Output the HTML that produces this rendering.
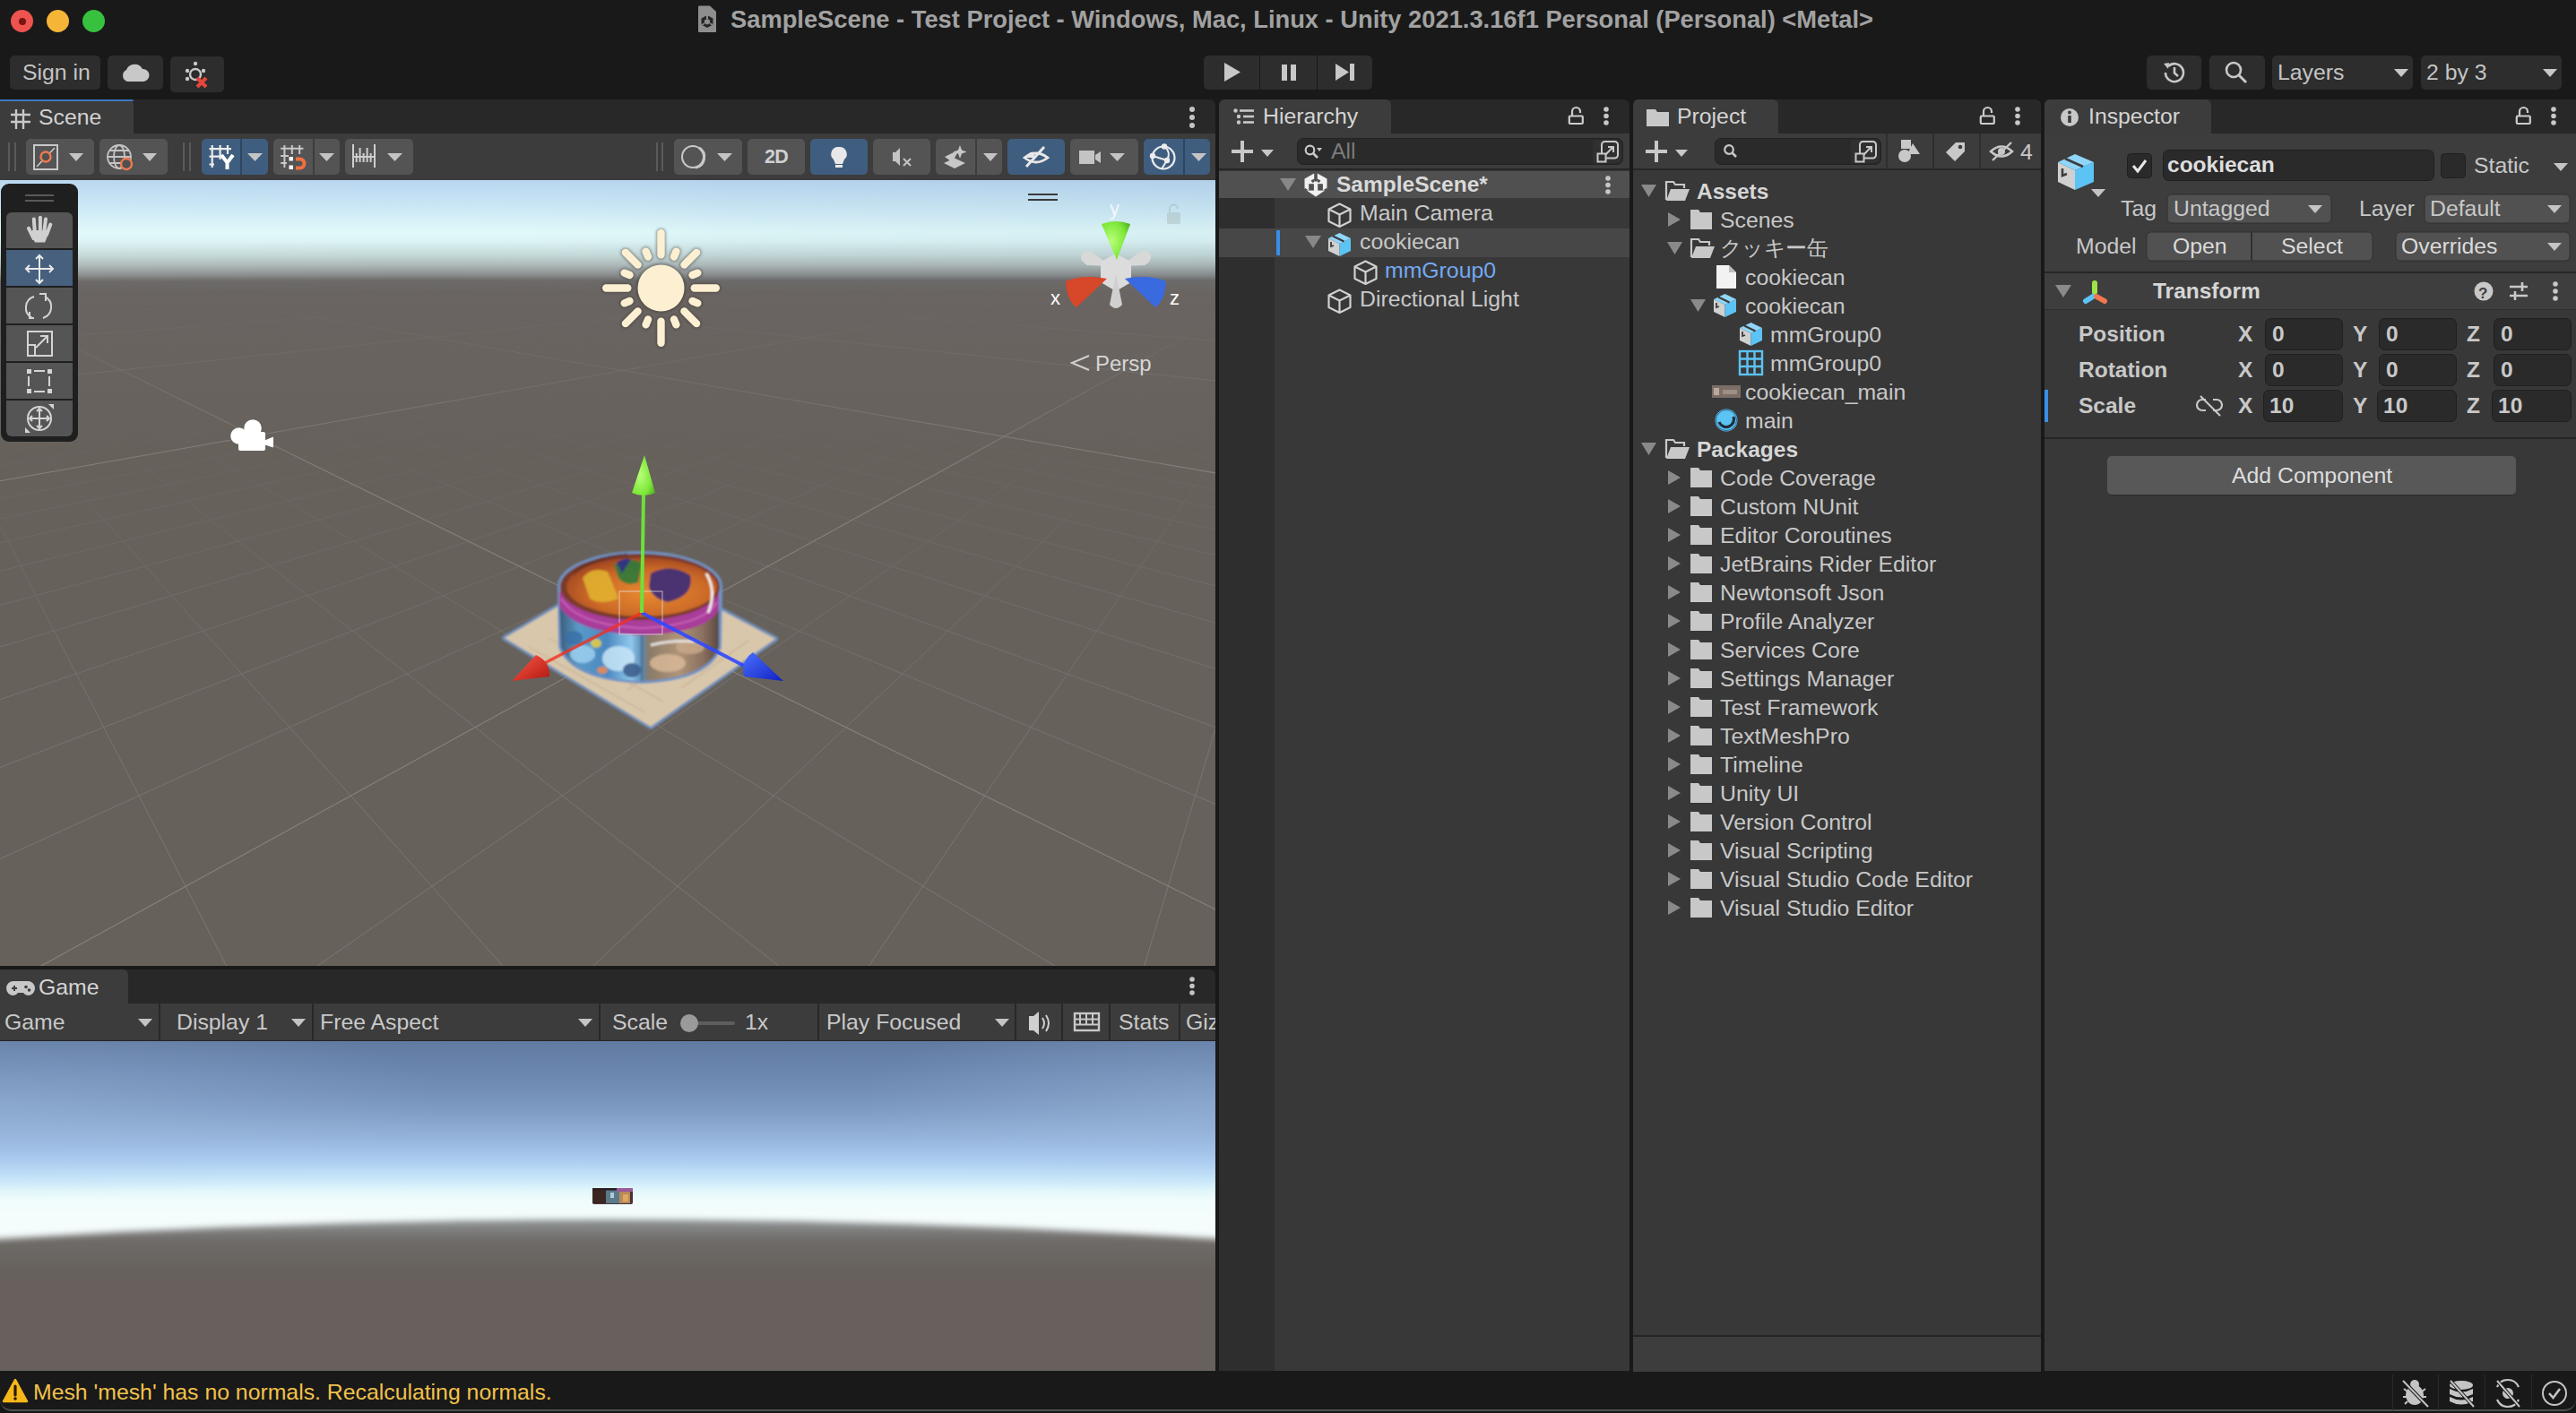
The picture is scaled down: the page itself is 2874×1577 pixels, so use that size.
<!DOCTYPE html>
<html><head><meta charset="utf-8">
<style>
*{box-sizing:border-box;margin:0;padding:0}
html,body{width:2874px;height:1577px;overflow:hidden;background:#191919}
body{position:relative;font-family:"Liberation Sans",sans-serif;font-size:24.8px;color:#c8c8c8}
.a{position:absolute}
.t{position:absolute;white-space:nowrap;line-height:1}
.b{font-weight:700;font-size:24.5px}
.tabbar{position:absolute;background:#282828;border-radius:6px 6px 0 0}
.tab{position:absolute;background:#3c3c3c;border-radius:6px 6px 0 0}
.tbar{position:absolute;background:#3c3c3c}
.btn{position:absolute;background:#545454;border-radius:5px}
.sel{background:#3f5d7f}
.panel{position:absolute;background:#383838}
.mtb{position:absolute;background:#2d2d2d;border-radius:5px}
svg{position:absolute;overflow:visible}
.dd{position:absolute;width:0;height:0;border-left:8px solid transparent;border-right:8px solid transparent;border-top:9px solid #c4c4c4}
</style></head><body>
<!-- Title bar -->
<div class="a" style="left:12px;top:11px;width:25px;height:25px;border-radius:50%;background:#ee5350"></div>
<div class="a" style="left:20.5px;top:19.5px;width:8px;height:8px;border-radius:50%;background:#7a1410"></div>
<div class="a" style="left:52px;top:11px;width:25px;height:25px;border-radius:50%;background:#f5b537"></div>
<div class="a" style="left:92px;top:11px;width:25px;height:25px;border-radius:50%;background:#38c13e"></div>
<svg width="26" height="32" viewBox="0 0 26 32" style="left:778px;top:5px"><path d="M1 2.5Q1 1.5 2 1.5H14L21 8V30Q21 31 20 31H2Q1 31 1 30Z" fill="#8e8e8e"/><path d="M11 12L17.5 15.5V22.5L11 26L4.5 22.5V15.5Z" fill="#262626"/><path d="M11 16L14 17.5V21L11 22.5L8 21V17.5Z" fill="#8e8e8e"/><rect x="10" y="11" width="2" height="5" fill="#8e8e8e"/><path d="M4.5 22L8 20.5V22L5.5 23.5Z M17.5 22L14 20.5V22L16.5 23.5Z" fill="#8e8e8e"/></svg>
<div class="t b" style="left:815px;top:8px;font-size:27.3px;color:#a2a2a2">SampleScene - Test Project - Windows, Mac, Linux - Unity 2021.3.16f1 Personal (Personal) &lt;Metal&gt;</div>
<!-- Main toolbar -->
<div class="mtb" style="left:11px;top:62px;width:101px;height:38px"></div>
<div class="t" style="left:25px;top:69px;color:#c4c4c4">Sign in</div>
<div class="mtb" style="left:120px;top:62px;width:62px;height:38px"></div>
<svg width="34" height="22" viewBox="0 0 34 22" style="left:134px;top:70px"><path d="M8 21A7 7 0 0 1 7 8A10 10 0 0 1 25 7A7 7 0 0 1 26 21Z" fill="#c8c8c8"/></svg>
<div class="mtb" style="left:190px;top:63px;width:60px;height:40px"></div>
<svg width="32" height="32" viewBox="0 0 32 32" style="left:205px;top:68px"><g fill="#c8c8c8"><circle cx="13" cy="3" r="2.2"/><circle cx="4" cy="11" r="2.2"/><circle cx="4" cy="20" r="2.2"/><circle cx="22" cy="11" r="2.2"/></g><circle cx="13" cy="15" r="6" fill="none" stroke="#c8c8c8" stroke-width="2.4"/><path d="M15 19L25 29M25 19L15 29" stroke="#e8453c" stroke-width="4"/></svg>
<div class="mtb" style="left:1343px;top:62px;width:62px;height:38px;border-radius:5px 0 0 5px"></div>
<div class="mtb" style="left:1406px;top:62px;width:63px;height:38px;border-radius:0"></div>
<div class="mtb" style="left:1470px;top:62px;width:61px;height:38px;border-radius:0 5px 5px 0"></div>
<svg width="200" height="40" viewBox="1340 60 200 40" style="left:1340px;top:60px">
<path d="M1366 70V91L1384 80.5Z" fill="#c8c8c8"/>
<rect x="1430" y="72" width="6" height="18" fill="#c8c8c8"/><rect x="1440" y="72" width="6" height="18" fill="#c8c8c8"/>
<path d="M1490 71V90L1505 80.5Z" fill="#c8c8c8"/><rect x="1506" y="71" width="5" height="19" fill="#c8c8c8"/>
</svg>
<div class="mtb" style="left:2395px;top:62px;width:61px;height:38px"></div>
<svg width="30" height="30" viewBox="0 0 30 30" style="left:2411px;top:66px"><path d="M5 15A10 10 0 1 0 8 8" stroke="#c8c8c8" stroke-width="2.6" fill="none"/><path d="M3 5L9 4L8 11Z" fill="#c8c8c8"/><path d="M15 9V15.5L19 19" stroke="#c8c8c8" stroke-width="2.6" fill="none"/></svg>
<div class="mtb" style="left:2465px;top:62px;width:62px;height:38px"></div>
<svg width="30" height="30" viewBox="0 0 30 30" style="left:2481px;top:67px"><circle cx="11" cy="11" r="8" stroke="#c8c8c8" stroke-width="2.6" fill="none"/><path d="M17 17L25 25" stroke="#c8c8c8" stroke-width="3"/></svg>
<div class="mtb" style="left:2535px;top:62px;width:157px;height:38px"></div>
<div class="t" style="left:2541px;top:69px;color:#c4c4c4">Layers</div>
<div class="mtb" style="left:2701px;top:62px;width:157px;height:38px"></div>
<div class="t" style="left:2707px;top:69px;color:#c4c4c4">2 by 3</div>
<svg width="200" height="20" viewBox="2660 70 200 20" style="left:2660px;top:70px"><path d="M2671 77H2687L2679 86Z" fill="#c8c8c8"/><path d="M2837 77H2853L2845 86Z" fill="#c8c8c8"/></svg>

<!-- SCENE PANEL -->
<div class="tabbar" style="left:0;top:111px;width:1356px;height:38px;border-radius:0 6px 0 0"></div>
<div class="tab" style="left:0;top:111px;width:149px;height:38px;border-radius:0 6px 0 0"></div>
<div class="a" style="left:0;top:111px;width:149px;height:2px;background:#3d78c2;border-radius:0 2px 0 0"></div>
<svg width="24" height="24" style="left:11px;top:121px" viewBox="0 0 24 24"><g stroke="#c8c8c8" stroke-width="2.4" fill="none"><path d="M7 1v22M15 1v22M1 7h22M1 15h22"/></g></svg>
<div class="t" style="left:43px;top:119px;color:#d2d2d2">Scene</div>
<svg width="8" height="26" style="left:1326px;top:118px" viewBox="0 0 8 26"><g fill="#c4c4c4"><circle cx="4" cy="4" r="3"/><circle cx="4" cy="13" r="3"/><circle cx="4" cy="22" r="3"/></g></svg>
<div class="tbar" style="left:0;top:149px;width:1356px;height:52px"></div>
<div class="a" style="left:9px;top:159px;width:2px;height:32px;background:#5a5a5a"></div>
<div class="a" style="left:16px;top:159px;width:2px;height:32px;background:#5a5a5a"></div>
<div class="btn" style="left:29px;top:155px;width:76px;height:40px"></div>
<div class="btn" style="left:111px;top:155px;width:76px;height:40px"></div>
<div class="a" style="left:204px;top:159px;width:2px;height:32px;background:#5a5a5a"></div>
<div class="a" style="left:211px;top:159px;width:2px;height:32px;background:#5a5a5a"></div>
<div class="btn sel" style="left:225px;top:155px;width:74px;height:40px"></div>
<div class="a" style="left:268px;top:155px;width:2px;height:40px;background:#2f4660"></div>
<div class="btn" style="left:305px;top:155px;width:74px;height:40px"></div>
<div class="a" style="left:349px;top:155px;width:2px;height:40px;background:#3c3c3c"></div>
<div class="btn" style="left:385px;top:155px;width:76px;height:40px"></div>
<div class="a" style="left:732px;top:159px;width:2px;height:32px;background:#5a5a5a"></div>
<div class="a" style="left:738px;top:159px;width:2px;height:32px;background:#5a5a5a"></div>
<div class="btn" style="left:752px;top:155px;width:76px;height:40px"></div>
<div class="btn" style="left:834px;top:155px;width:64px;height:40px"></div>
<div class="btn sel" style="left:904px;top:155px;width:64px;height:40px"></div>
<div class="btn" style="left:974px;top:155px;width:64px;height:40px"></div>
<div class="btn" style="left:1044px;top:155px;width:74px;height:40px"></div>
<div class="a" style="left:1088px;top:155px;width:2px;height:40px;background:#3c3c3c"></div>
<div class="btn sel" style="left:1124px;top:155px;width:64px;height:40px"></div>
<div class="btn" style="left:1194px;top:155px;width:76px;height:40px"></div>
<div class="btn sel" style="left:1276px;top:155px;width:74px;height:40px"></div>
<div class="a" style="left:1320px;top:155px;width:2px;height:40px;background:#2f4660"></div>
<div class="t b" style="left:853px;top:164.5px;color:#d0d0d0;font-size:21.5px;letter-spacing:-0.8px">2D</div>
<svg width="1356" height="60" viewBox="0 145 1356 60" style="left:0;top:145px">
<g fill="#c4c4c4">
<path d="M77 171H93L85 180Z"/><path d="M159 171H175L167 180Z"/><path d="M276 171H293L284.5 180Z"/><path d="M356 171H373L364.5 180Z"/><path d="M432 171H449L440.5 180Z"/>
<path d="M800 171H817L808.5 180Z"/><path d="M1097 171H1113L1105 180Z"/><path d="M1238 171H1255L1246.5 180Z"/><path d="M1329 171H1346L1337.5 180Z"/>
</g>
<!-- btn1 icon -->
<rect x="38" y="162" width="26" height="27" fill="none" stroke="#c8c8c8" stroke-width="2"/>
<path d="M41 186L61 165" stroke="#c8c8c8" stroke-width="1.6"/>
<circle cx="51" cy="175" r="5.5" fill="#505050" stroke="#f07a50" stroke-width="2.4"/>
<!-- globe -->
<g stroke="#c4c4c4" stroke-width="1.8" fill="none"><circle cx="133" cy="175" r="13"/><ellipse cx="133" cy="175" rx="6" ry="13"/><path d="M120 175H146M122 168H144M122 182H144"/></g>
<circle cx="141" cy="183" r="6" fill="#505050" stroke="#f07a50" stroke-width="2.4"/>
<!-- grid Y -->
<g stroke="#ececec" stroke-width="2.2" fill="none"><path d="M236.7 162V187M245.6 162V178M254 162V172M233.5 166.2H258M233.5 174.6H246M233.5 183.5H239"/></g>
<path d="M247 173L253.5 181.5L260 173M253.5 181V189" stroke="#ffffff" stroke-width="4" fill="none"/>
<!-- grid snap -->
<g stroke="#c8c8c8" stroke-width="2" fill="none"><path d="M317.4 162V187M325.8 162V172M334.2 162V172M313.2 165.7H338.4M313.2 174.1H322M313.2 182H320"/></g>
<rect x="322.5" y="175" width="4.5" height="4.5" fill="#fff"/><rect x="322.5" y="184.5" width="4.5" height="4.5" fill="#fff"/>
<path d="M330 177.5H334.5A5 5 0 0 1 334.5 187.5H330" stroke="#f07040" stroke-width="4" fill="none"/>
<!-- ruler -->
<g stroke="#cfcfcf" stroke-width="2" fill="none"><path d="M394 161V187M418 161V187M394 175H418M397.7 171V181M401.6 165V181M405.6 171V181M409.6 165V181M413.6 171V181"/></g>
<!-- shading sphere -->
<circle cx="773" cy="175" r="12" fill="none" stroke="#c8c8c8" stroke-width="2"/>
<path d="M780 165A12 12 0 0 1 776 187" stroke="#c8c8c8" stroke-width="3" fill="none"/>
<!-- bulb -->
<path d="M936 164A8 8 0 0 1 942 178L940 183H932L930 178A8 8 0 0 1 936 164Z" fill="#e8e8e8"/>
<rect x="932" y="184" width="8" height="3" fill="#e8e8e8"/>
<!-- audio muted -->
<path d="M996 170H999L1004 165V185L999 180H996Z" fill="#c4c4c4"/><path d="M1008 177L1016 185M1016 177L1008 185" stroke="#c4c4c4" stroke-width="2"/>
<!-- effects -->
<path d="M1053 182L1065 176.5L1077 182L1065 188Z" fill="#c8c8c8"/>
<path d="M1054 175L1065 169.5L1068 171L1064 178L1072 180L1065 183Z" fill="#c8c8c8"/>
<path d="M1071 162L1073 167.5L1078.5 169.5L1073 171.5L1071 177L1069 171.5L1063.5 169.5L1069 167.5Z" fill="#c8c8c8"/>
<!-- hidden eye -->
<path d="M1143 176Q1156 166 1169 176Q1156 186 1143 176Z" fill="none" stroke="#e8e8e8" stroke-width="2.8"/><path d="M1146 176A6 6 0 0 1 1154 170V176Z" fill="#e8e8e8"/>
<path d="M1145 186L1165 164" stroke="#e8e8e8" stroke-width="3"/>
<!-- camera -->
<rect x="1204" y="168" width="17" height="15" fill="#c4c4c4"/><path d="M1222 173L1228 169V182L1222 178Z" fill="#c4c4c4"/>
<!-- gizmo globe -->
<circle cx="1298" cy="176" r="12.5" fill="none" stroke="#ececec" stroke-width="2.2"/>
<path d="M1299 163Q1307 170 1302 179L1286 174M1302 179L1296 188.5" stroke="#ececec" stroke-width="2" fill="none"/>
<g fill="#ececec"><circle cx="1299" cy="163.5" r="3.2"/><circle cx="1286" cy="174" r="3.2"/><circle cx="1302" cy="179" r="3.2"/></g>
</svg>

<div class="a" style="left:0;top:201px;width:1356px;height:877px;overflow:hidden;background:linear-gradient(#b8d6f0 0px,#c8e5f5 26px,#e0f9fa 58px,#dcf4f5 68px,#c4d8d8 84px,#adb8b8 95px,#8d9090 105px,#6c6a69 112px,#6a6562 125px,#67615c 300px)">
<svg width="1356" height="877" viewBox="0 201 1356 877" style="left:0;top:0">
<defs>
<linearGradient id="gfade" x1="0" y1="0" x2="0" y2="1"><stop offset="0" stop-color="#fff" stop-opacity="0"/><stop offset="0.118" stop-color="#fff" stop-opacity="0.03"/><stop offset="0.224" stop-color="#fff" stop-opacity="0.15"/><stop offset="0.38" stop-color="#fff" stop-opacity="0.4"/><stop offset="0.59" stop-color="#fff" stop-opacity="0.8"/><stop offset="0.816" stop-color="#fff" stop-opacity="1"/><stop offset="1" stop-color="#fff" stop-opacity="1"/></linearGradient>
<linearGradient id="gfade2" x1="0" y1="0" x2="0" y2="1"><stop offset="0" stop-color="#fff" stop-opacity="0"/><stop offset="0.04" stop-color="#fff" stop-opacity="0.05"/><stop offset="0.134" stop-color="#fff" stop-opacity="0.35"/><stop offset="0.29" stop-color="#fff" stop-opacity="1"/><stop offset="1" stop-color="#fff" stop-opacity="1"/></linearGradient>
<mask id="gmask" maskUnits="userSpaceOnUse" x="0" y="300" width="1356" height="800"><rect x="0" y="330" width="1356" height="760" fill="url(#gfade)"/></mask>
<mask id="gmask2" maskUnits="userSpaceOnUse" x="0" y="300" width="1356" height="800"><rect x="0" y="318" width="1356" height="760" fill="url(#gfade2)"/></mask>
<radialGradient id="green" cx="0.35" cy="0.5" r="0.8"><stop offset="0" stop-color="#b8ff78"/><stop offset="0.6" stop-color="#7ee83a"/><stop offset="1" stop-color="#4aa820"/></radialGradient>
<linearGradient id="redc" x1="0" y1="0" x2="1" y2="1"><stop offset="0" stop-color="#ff5a4a"/><stop offset="1" stop-color="#b01810"/></linearGradient>
<linearGradient id="bluec" x1="0" y1="0" x2="1" y2="1"><stop offset="0" stop-color="#4a70ff"/><stop offset="1" stop-color="#1020c0"/></linearGradient>
<linearGradient id="canside" x1="0" y1="0" x2="1" y2="0"><stop offset="0" stop-color="#3a5a78"/><stop offset="0.12" stop-color="#5a9ac8"/><stop offset="0.3" stop-color="#4a88c0"/><stop offset="0.45" stop-color="#90c8ec"/><stop offset="0.52" stop-color="#5a8ab0"/><stop offset="0.56" stop-color="#8a7a68"/><stop offset="0.75" stop-color="#b09478"/><stop offset="0.9" stop-color="#8a7060"/><stop offset="1" stop-color="#5a4a40"/></linearGradient>
<radialGradient id="cantop" cx="0.55" cy="0.6" r="0.65"><stop offset="0" stop-color="#e88a30"/><stop offset="0.6" stop-color="#cc6a28"/><stop offset="1" stop-color="#9a4020"/></radialGradient>
<filter id="canblur" x="-0.1" y="-0.1" width="1.2" height="1.2"><feGaussianBlur stdDeviation="0.9"/></filter>
<linearGradient id="skyh" x1="0" y1="0" x2="1" y2="0"><stop offset="0" stop-color="#ffffff" stop-opacity="0.05"/><stop offset="0.35" stop-color="#ffffff" stop-opacity="0"/><stop offset="0.6" stop-color="#5a7890" stop-opacity="0.04"/><stop offset="1" stop-color="#5a7890" stop-opacity="0.07"/></linearGradient>
</defs>
<rect x="0" y="201" width="1356" height="113" fill="url(#skyh)"/>
<g stroke="#7d7772" stroke-width="1" mask="url(#gmask)"><line x1="-20.0" y1="547.9" x2="264.1" y2="1100.0"/><line x1="-20.0" y1="427.9" x2="580.7" y2="1100.0"/><line x1="-20.0" y1="379.4" x2="897.1" y2="1100.0"/><line x1="-20.0" y1="353.1" x2="1213.1" y2="1100.0"/><line x1="-20.0" y1="325.4" x2="1380.0" y2="907.2"/><line x1="-20.0" y1="317.2" x2="1380.0" y2="820.1"/><line x1="-20.0" y1="311.0" x2="1380.0" y2="753.9"/><line x1="-20.0" y1="306.1" x2="1380.0" y2="701.9"/><line x1="-20.0" y1="302.1" x2="1380.0" y2="659.9"/><line x1="-15.2" y1="300.0" x2="1380.0" y2="625.3"/><line x1="-2.0" y1="300.0" x2="1380.0" y2="596.3"/><line x1="11.1" y1="300.0" x2="1380.0" y2="571.7"/><line x1="24.2" y1="300.0" x2="1380.0" y2="550.5"/><line x1="50.5" y1="300.0" x2="1380.0" y2="515.8"/><line x1="63.6" y1="300.0" x2="1380.0" y2="501.5"/><line x1="76.6" y1="300.0" x2="1380.0" y2="488.7"/><line x1="89.7" y1="300.0" x2="1380.0" y2="477.2"/><line x1="102.8" y1="300.0" x2="1380.0" y2="466.9"/><line x1="115.8" y1="300.0" x2="1380.0" y2="457.6"/><line x1="128.8" y1="300.0" x2="1380.0" y2="449.0"/><line x1="141.8" y1="300.0" x2="1380.0" y2="441.3"/><line x1="154.8" y1="300.0" x2="1380.0" y2="434.1"/><line x1="180.8" y1="300.0" x2="1380.0" y2="421.4"/><line x1="193.7" y1="300.0" x2="1380.0" y2="415.8"/><line x1="206.7" y1="300.0" x2="1380.0" y2="410.5"/><line x1="219.6" y1="300.0" x2="1380.0" y2="405.7"/><line x1="232.5" y1="300.0" x2="1380.0" y2="401.1"/><line x1="245.4" y1="300.0" x2="1380.0" y2="396.8"/><line x1="258.3" y1="300.0" x2="1380.0" y2="392.8"/><line x1="271.2" y1="300.0" x2="1380.0" y2="389.0"/><line x1="284.1" y1="300.0" x2="1380.0" y2="385.5"/><line x1="309.7" y1="300.0" x2="1380.0" y2="379.0"/><line x1="322.6" y1="300.0" x2="1380.0" y2="376.0"/><line x1="335.4" y1="300.0" x2="1380.0" y2="373.1"/><line x1="348.2" y1="300.0" x2="1380.0" y2="370.4"/><line x1="361.0" y1="300.0" x2="1380.0" y2="367.9"/><line x1="373.7" y1="300.0" x2="1380.0" y2="365.4"/><line x1="386.5" y1="300.0" x2="1380.0" y2="363.1"/><line x1="399.2" y1="300.0" x2="1380.0" y2="360.9"/><line x1="412.0" y1="300.0" x2="1380.0" y2="358.8"/><line x1="437.4" y1="300.0" x2="1380.0" y2="354.8"/><line x1="450.1" y1="300.0" x2="1380.0" y2="353.0"/><line x1="462.7" y1="300.0" x2="1380.0" y2="351.2"/><line x1="475.4" y1="300.0" x2="1380.0" y2="349.5"/><line x1="488.1" y1="300.0" x2="1380.0" y2="347.9"/><line x1="500.7" y1="300.0" x2="1380.0" y2="346.3"/><line x1="513.3" y1="300.0" x2="1380.0" y2="344.8"/><line x1="525.9" y1="300.0" x2="1380.0" y2="343.3"/><line x1="538.5" y1="300.0" x2="1380.0" y2="341.9"/><line x1="563.7" y1="300.0" x2="1380.0" y2="339.3"/><line x1="576.3" y1="300.0" x2="1380.0" y2="338.0"/><line x1="588.8" y1="300.0" x2="1380.0" y2="336.8"/><line x1="601.3" y1="300.0" x2="1380.0" y2="335.6"/><line x1="613.9" y1="300.0" x2="1380.0" y2="334.5"/><line x1="649.5" y1="300.0" x2="-20.0" y2="325.2"/><line x1="662.8" y1="300.0" x2="-20.0" y2="326.1"/><line x1="676.1" y1="300.0" x2="-20.0" y2="327.0"/><line x1="702.7" y1="300.0" x2="-20.0" y2="328.9"/><line x1="715.9" y1="300.0" x2="-20.0" y2="330.0"/><line x1="729.2" y1="300.0" x2="-20.0" y2="331.0"/><line x1="742.4" y1="300.0" x2="-20.0" y2="332.1"/><line x1="755.6" y1="300.0" x2="-20.0" y2="333.2"/><line x1="768.8" y1="300.0" x2="-20.0" y2="334.4"/><line x1="782.0" y1="300.0" x2="-20.0" y2="335.6"/><line x1="795.1" y1="300.0" x2="-20.0" y2="336.8"/><line x1="808.3" y1="300.0" x2="-20.0" y2="338.1"/><line x1="834.6" y1="300.0" x2="-20.0" y2="340.8"/><line x1="847.7" y1="300.0" x2="-20.0" y2="342.2"/><line x1="860.8" y1="300.0" x2="-20.0" y2="343.7"/><line x1="873.8" y1="300.0" x2="-20.0" y2="345.3"/><line x1="886.9" y1="300.0" x2="-20.0" y2="346.9"/><line x1="900.0" y1="300.0" x2="-20.0" y2="348.5"/><line x1="913.0" y1="300.0" x2="-20.0" y2="350.3"/><line x1="926.0" y1="300.0" x2="-20.0" y2="352.1"/><line x1="939.0" y1="300.0" x2="-20.0" y2="354.0"/><line x1="965.0" y1="300.0" x2="-20.0" y2="358.1"/><line x1="978.0" y1="300.0" x2="-20.0" y2="360.2"/><line x1="990.9" y1="300.0" x2="-20.0" y2="362.5"/><line x1="1003.9" y1="300.0" x2="-20.0" y2="364.9"/><line x1="1016.8" y1="300.0" x2="-20.0" y2="367.4"/><line x1="1029.7" y1="300.0" x2="-20.0" y2="370.1"/><line x1="1042.6" y1="300.0" x2="-20.0" y2="372.8"/><line x1="1055.5" y1="300.0" x2="-20.0" y2="375.8"/><line x1="1068.4" y1="300.0" x2="-20.0" y2="378.8"/><line x1="1094.1" y1="300.0" x2="-20.0" y2="385.6"/><line x1="1106.9" y1="300.0" x2="-20.0" y2="389.3"/><line x1="1119.7" y1="300.0" x2="-20.0" y2="393.2"/><line x1="1132.5" y1="300.0" x2="-20.0" y2="397.3"/><line x1="1145.3" y1="300.0" x2="-20.0" y2="401.7"/><line x1="1158.1" y1="300.0" x2="-20.0" y2="406.5"/><line x1="1170.9" y1="300.0" x2="-20.0" y2="411.6"/><line x1="1183.6" y1="300.0" x2="-20.0" y2="417.0"/><line x1="1196.4" y1="300.0" x2="-20.0" y2="422.9"/><line x1="1221.8" y1="300.0" x2="-20.0" y2="436.2"/><line x1="1234.5" y1="300.0" x2="-20.0" y2="443.7"/><line x1="1247.2" y1="300.0" x2="-20.0" y2="451.9"/><line x1="1259.8" y1="300.0" x2="-20.0" y2="460.9"/><line x1="1272.5" y1="300.0" x2="-20.0" y2="470.8"/><line x1="1285.1" y1="300.0" x2="-20.0" y2="481.7"/><line x1="1297.7" y1="300.0" x2="-20.0" y2="493.9"/><line x1="1310.4" y1="300.0" x2="-20.0" y2="507.5"/><line x1="1323.0" y1="300.0" x2="-20.0" y2="522.9"/><line x1="1348.1" y1="300.0" x2="-20.0" y2="560.2"/><line x1="1360.7" y1="300.0" x2="-20.0" y2="583.3"/><line x1="1373.2" y1="300.0" x2="-20.0" y2="610.3"/><line x1="1380.0" y1="301.4" x2="-20.0" y2="642.2"/><line x1="1380.0" y1="304.9" x2="-20.0" y2="680.8"/><line x1="1380.0" y1="309.2" x2="-20.0" y2="728.0"/><line x1="1380.0" y1="314.6" x2="-20.0" y2="787.4"/><line x1="1380.0" y1="321.6" x2="-20.0" y2="864.3"/><line x1="1380.0" y1="331.0" x2="-20.0" y2="967.7"/><line x1="1380.0" y1="364.7" x2="322.5" y2="1100.0"/><line x1="1380.0" y1="399.7" x2="638.6" y2="1100.0"/><line x1="1380.0" y1="473.7" x2="954.5" y2="1100.0"/><line x1="1380.0" y1="733.9" x2="1270.0" y2="1100.0"/></g>
<g stroke="#88827c" stroke-width="1.1" mask="url(#gmask2)"><line x1="-20.0" y1="336.7" x2="1380.0" y2="1026.7"/><line x1="37.4" y1="300.0" x2="1380.0" y2="532.0"/><line x1="167.8" y1="300.0" x2="1380.0" y2="427.5"/><line x1="296.9" y1="300.0" x2="1380.0" y2="382.1"/><line x1="424.7" y1="300.0" x2="1380.0" y2="356.8"/><line x1="551.1" y1="300.0" x2="1380.0" y2="340.6"/><line x1="689.4" y1="300.0" x2="-20.0" y2="327.9"/><line x1="821.4" y1="300.0" x2="-20.0" y2="339.4"/><line x1="952.0" y1="300.0" x2="-20.0" y2="356.0"/><line x1="1081.2" y1="300.0" x2="-20.0" y2="382.1"/><line x1="1209.1" y1="300.0" x2="-20.0" y2="429.3"/><line x1="1335.5" y1="300.0" x2="-20.0" y2="540.3"/><line x1="1380.0" y1="344.4" x2="5.9" y2="1100.0"/></g>
<!-- sun -->
<g transform="translate(737.5 321.5)">
<filter id="sunsh" x="-0.3" y="-0.3" width="1.6" height="1.6"><feGaussianBlur stdDeviation="1.6"/></filter>
<g filter="url(#sunsh)" opacity="0.45"><g stroke="#3a3430" stroke-width="11" stroke-linecap="round" fill="none"><path d="M0 -37.2V-61.3M0 37.2V61.3M-37.2 0H-61.3M37.2 0H61.3M25.9 -25.9L39.6 -39.6M-25.9 -25.9L-39.6 -39.6M25.9 25.9L39.6 39.6M-25.9 25.9L-39.6 39.6M14.5 35.0L16.9 40.8M35.0 14.5L40.8 16.9M14.5 -35.0L16.9 -40.8M35.0 -14.5L40.8 -16.9M-14.5 35.0L-16.9 40.8M-35.0 14.5L-40.8 16.9M-14.5 -35.0L-16.9 -40.8M-35.0 -14.5L-40.8 -16.9"/></g><circle r="28" fill="#3a3430"/></g>
<g stroke="#fdf0d2" stroke-width="8.4" stroke-linecap="round" fill="none"><path d="M0 -37.2V-61.3M0 37.2V61.3M-37.2 0H-61.3M37.2 0H61.3M25.9 -25.9L39.6 -39.6M-25.9 -25.9L-39.6 -39.6M25.9 25.9L39.6 39.6M-25.9 25.9L-39.6 39.6M14.5 35.0L16.9 40.8M35.0 14.5L40.8 16.9M14.5 -35.0L16.9 -40.8M35.0 -14.5L40.8 -16.9M-14.5 35.0L-16.9 40.8M-35.0 14.5L-40.8 16.9M-14.5 -35.0L-16.9 -40.8M-35.0 -14.5L-40.8 -16.9"/></g>
<circle r="26" fill="#fdf0d2"/>
</g>
<!-- camera gizmo icon -->
<g fill="#ffffff">
<circle cx="282" cy="478" r="9.8"/><circle cx="266.5" cy="486.5" r="9.3"/>
<rect x="266" y="482" width="30" height="21" rx="2"/>
<path d="M294 492L305 487.5V499.5L294 496Z"/>
</g>
<!-- drag handle -->
<g stroke="#3a3a3a" stroke-width="2"><path d="M1147 217H1180M1147 223H1180"/></g>
<!-- lock faint -->
<rect x="1302" y="237" width="15" height="13" rx="2" fill="#9aa" fill-opacity="0.35"/>
<path d="M1305 237v-4a4.5 4.5 0 0 1 9 0" stroke="#9aa" stroke-opacity="0.35" stroke-width="2" fill="none"/>
<!-- orientation gizmo -->
<g>
<path d="M1213 296 Q1203 290 1207 283 Q1213 276 1222 284 L1240 297Z" fill="#d8d8d8"/>
<path d="M1277 296 Q1287 290 1283 283 Q1277 276 1268 284 L1250 297Z" fill="#d8d8d8"/>
<path d="M1228 292 L1245 283 L1262 292 L1262 315 L1245 325 L1228 315Z" fill="#dcdcdc"/>
<path d="M1245 305 L1238 340 Q1245 348 1252 340Z" fill="#d0d0d0"/>
<path d="M1229 250 Q1245 244 1261 250 L1246 290Z" fill="url(#green)"/>
<path d="M1189 314 Q1208 306 1235 311 L1201 343 Q1190 335 1189 314Z" fill="#d7472a"/>
<path d="M1301 314 Q1282 306 1255 311 L1289 343 Q1300 335 1301 314Z" fill="#3a6ae0"/>
<text x="1238" y="240" font-size="22" fill="#ffffff" fill-opacity="0.75" font-family="Liberation Sans">y</text>
<text x="1172" y="340" font-size="22" fill="#ffffff" font-family="Liberation Sans">x</text>
<text x="1305" y="340" font-size="22" fill="#ffffff" font-family="Liberation Sans">z</text>
</g>
<!-- persp -->
<path d="M1215 397 L1196 405 L1215 413 M1202 405" stroke="#cfcfcf" stroke-width="2" fill="none"/>
<text x="1222" y="414" font-size="24" fill="#d6d6d6" font-family="Liberation Sans">Persp</text>
<!-- cookie can -->
<g filter="url(#canblur)">
<path d="M563 712 L705 628 L865 713 L726 811Z" fill="none" stroke="#6f93c4" stroke-width="6" stroke-linejoin="round" stroke-opacity="0.9"/>
<path d="M563 712 L705 628 L865 713 L726 811Z" fill="#d9c7ac"/>
<path d="M590 722 L720 795 M612 712 L740 783 M800 700 L700 770 M835 715 L760 768" stroke="#c9b394" stroke-width="2" fill="none" opacity="0.7"/>
<path d="M625 655 A89 37 0 0 1 803 655 L802 722 Q790 757 716 760 Q640 757 626 722 Z" fill="#6f93c4" stroke="#6f93c4" stroke-width="6" stroke-linejoin="round"/>
<path d="M624 666 L626 722 Q640 757 716 760 Q790 757 802 722 L802 666 Z" fill="url(#canside)"/>
<g opacity="0.85">
<ellipse cx="650" cy="730" rx="14" ry="10" fill="#9ed0f0"/>
<ellipse cx="690" cy="735" rx="18" ry="14" fill="#c8e6f8"/>
<ellipse cx="640" cy="712" rx="10" ry="8" fill="#3a70a8"/>
<ellipse cx="672" cy="748" rx="6" ry="4" fill="#f08a50"/>
<ellipse cx="665" cy="718" rx="6" ry="5" fill="#e8d040"/>
<ellipse cx="705" cy="748" rx="10" ry="8" fill="#3a5a8a"/>
<ellipse cx="745" cy="740" rx="20" ry="10" fill="#d8b898"/>
<ellipse cx="770" cy="722" rx="16" ry="8" fill="#c8a888"/>
<path d="M726 720 Q750 714 775 716" stroke="#f0f0f0" stroke-width="3" fill="none"/>
</g>
<path d="M716 706 V760" stroke="#3a5a7a" stroke-width="2" opacity="0.6"/>
<path d="M624 660 L624 676 Q640 706 716 709 Q790 706 802 680 L802 660 Z" fill="#a83c9a"/>
<path d="M626 668 Q645 698 716 701 Q785 698 800 672" stroke="#c860b8" stroke-width="2" fill="none"/>
<ellipse cx="714" cy="655" rx="89" ry="37" fill="#7a3a2a"/>
<ellipse cx="716" cy="655" rx="84" ry="33" fill="url(#cantop)"/>
<path d="M650 645 Q660 632 678 638 L690 668 Q670 676 658 668Z" fill="#e0b030" opacity="0.9"/>
<path d="M685 630 Q700 620 716 628 L712 650 Q698 655 690 645Z" fill="#2f7a3a" opacity="0.9"/>
<path d="M688 628 Q696 622 704 624 L694 640Z" fill="#30308a" opacity="0.9"/>
<path d="M726 640 Q748 628 770 642 Q775 665 745 672 Q728 668 724 655Z" fill="#3c2a78" opacity="0.9"/>
<path d="M788 640 Q800 660 790 684" stroke="#f4f0ea" stroke-width="3" fill="none"/>
<path d="M640 640 Q660 622 700 619" stroke="#5a2a1a" stroke-width="3" fill="none" opacity="0.6"/>
</g>
<rect x="691" y="660" width="48" height="48" fill="none" stroke="#e8e8e8" stroke-opacity="0.6" stroke-width="1.2"/>
<!-- move gizmo -->
<path d="M716 684 L598 745" stroke="#f03020" stroke-opacity="0.8" stroke-width="3.5"/>
<path d="M716 684 L830 743" stroke="#3048ff" stroke-opacity="0.9" stroke-width="4"/>
<path d="M716 684 L718 549" stroke="#6ee03a" stroke-width="4"/>
<path d="M705 550 Q718 556 731 550 L719 508Z" fill="url(#green)"/>
<path d="M571 760 L598 731 Q614 738 613 755Z" fill="url(#redc)"/>
<path d="M874 760 L840 728 Q826 738 830 755Z" fill="url(#bluec)"/>
</svg>
<!-- tools palette -->
<div class="a" style="left:1px;top:4px;width:86px;height:288px;background:#1f1f1f;border-radius:9px"></div>
<div class="a" style="left:28px;top:16px;width:32px;height:2px;background:#5a5a5a"></div>
<div class="a" style="left:28px;top:22px;width:32px;height:2px;background:#5a5a5a"></div>
<div class="a" style="left:7px;top:36px;width:74px;height:40px;background:#555;border-radius:6px 6px 0 0"></div>
<div class="a" style="left:7px;top:78px;width:74px;height:40px;background:#46607e"></div>
<div class="a" style="left:7px;top:120px;width:74px;height:40px;background:#555"></div>
<div class="a" style="left:7px;top:162px;width:74px;height:40px;background:#555"></div>
<div class="a" style="left:7px;top:204px;width:74px;height:40px;background:#555"></div>
<div class="a" style="left:7px;top:246px;width:74px;height:40px;background:#555;border-radius:0 0 6px 6px"></div>
<svg width="88" height="300" style="left:0;top:0" viewBox="0 201 88 300">
<g stroke="#d0d0d0" stroke-width="4" stroke-linecap="round" fill="none"><path d="M37.8 244.5L38.8 259M44.9 242.7V256M51 244.5L49.5 257M56.3 250.5L52 262M32 254.8L37.5 266"/></g><path d="M36 257L54 257L53.5 262L50.2 270.6L39 270.6L35 263Z" fill="#d0d0d0"/>
<g stroke="#e8e8e8" stroke-width="2" fill="none"><path d="M44 285V316M29 300H59M40 289L44 285L48 289M40 312L44 316L48 312M33 296L29 300L33 304M55 296L59 300L55 304"/></g>
<g stroke="#d4d4d4" stroke-width="2" fill="none"><path d="M38 331 A13 13 0 0 0 36 355M50 331 A13 13 0 0 1 48 355M44 328L51 328L51 336M38 355L33 355L33 348"/></g>
<g stroke="#d4d4d4" stroke-width="2" fill="none"><rect x="31" y="370" width="27" height="27"/><path d="M31 385H39V397M40 388L52 376M45 375H53V383"/></g>
<g fill="#d4d4d4"><rect x="30" y="412" width="5" height="5"/><rect x="53" y="412" width="5" height="5"/><rect x="30" y="434" width="5" height="5"/><rect x="53" y="434" width="5" height="5"/></g>
<g stroke="#d4d4d4" stroke-width="2" fill="none"><path d="M38 414H50M38 437H50M32 420V431M55 420V431"/></g>
<path d="M54 451H60V457Z" fill="#d4d4d4"/><path d="M28 477V483H34Z" fill="#d4d4d4"/><g stroke="#d4d4d4" stroke-width="2" fill="none"><circle cx="44" cy="467" r="13"/><path d="M44 456V478M33 467H55M41 459L44 456L47 459M41 475L44 478L47 475M36 464L33 467L36 470M52 464L55 467L52 470"/></g>
</svg>
</div>

<!-- GAME PANEL -->
<div class="tabbar" style="left:0;top:1082px;width:1356px;height:38px;border-radius:0 6px 0 0"></div>
<div class="tab" style="left:0;top:1082px;width:143px;height:38px;border-radius:0 6px 0 0"></div>
<svg width="30" height="18" viewBox="0 0 30 18" style="left:8px;top:1094px"><path d="M7 1H23A7 7 0 0 1 23 17Q20 17 18 14H12Q10 17 7 17A7 7 0 0 1 7 1Z" fill="#c8c8c8"/><path d="M5 9H11M8 6V12" stroke="#3c3c3c" stroke-width="2"/><circle cx="21" cy="7.5" r="1.8" fill="#3c3c3c"/><circle cx="24.5" cy="11" r="1.8" fill="#3c3c3c"/></svg>
<div class="t" style="left:43px;top:1090px;color:#d4d4d4">Game</div>
<svg width="8" height="22" viewBox="0 0 8 22" style="left:1326px;top:1090px"><g fill="#c4c4c4"><circle cx="4" cy="3" r="2.8"/><circle cx="4" cy="10.5" r="2.8"/><circle cx="4" cy="18" r="2.8"/></g></svg>
<div class="tbar" style="left:0;top:1120px;width:1356px;height:42px;border-bottom:1px solid #242424"></div>
<div class="a" style="left:177px;top:1120px;width:2px;height:41px;background:#282828"></div>
<div class="a" style="left:348px;top:1120px;width:2px;height:41px;background:#282828"></div>
<div class="a" style="left:668px;top:1120px;width:2px;height:41px;background:#282828"></div>
<div class="a" style="left:912px;top:1120px;width:2px;height:41px;background:#282828"></div>
<div class="a" style="left:1132px;top:1120px;width:2px;height:41px;background:#282828"></div>
<div class="a" style="left:1184px;top:1120px;width:2px;height:41px;background:#282828"></div>
<div class="a" style="left:1237px;top:1120px;width:2px;height:41px;background:#282828"></div>
<div class="a" style="left:1315px;top:1120px;width:2px;height:41px;background:#282828"></div>
<div class="t" style="left:5px;top:1129px">Game</div>
<div class="t" style="left:197px;top:1129px">Display 1</div>
<div class="t" style="left:357px;top:1129px">Free Aspect</div>
<div class="t" style="left:683px;top:1129px">Scale</div>
<div class="t" style="left:831px;top:1129px">1x</div>
<div class="t" style="left:922px;top:1129px">Play Focused</div>
<div class="t" style="left:1248px;top:1129px">Stats</div>
<div class="a" style="left:1323px;top:1120px;width:33px;height:41px;overflow:hidden"><div class="t" style="left:0;top:9px">Gizmos</div></div>
<svg width="1356" height="42" viewBox="0 1120 1356 42" style="left:0;top:1120px">
<g fill="#c4c4c4"><path d="M154 1137H170L162 1146Z"/><path d="M325 1137H341L333 1146Z"/><path d="M645 1137H661L653 1146Z"/><path d="M1110 1137H1126L1118 1146Z"/></g>
<rect x="770" y="1140" width="50" height="4" rx="2" fill="#5e5e5e"/>
<circle cx="769" cy="1142" r="10" fill="#9a9a9a"/>
<path d="M1148 1134H1153L1159 1129V1155L1153 1150H1148Z" fill="#d0d0d0"/><path d="M1163 1136Q1167 1142 1163 1148M1167 1133Q1173 1142 1167 1151" stroke="#d0d0d0" stroke-width="2" fill="none"/>
<rect x="1199" y="1131" width="27" height="19" fill="none" stroke="#c8c8c8" stroke-width="2.4"/>
<path d="M1199 1137.5H1226M1199 1143.5H1226M1205 1131V1143.5M1212 1131V1143.5M1219 1131V1143.5" stroke="#c8c8c8" stroke-width="2"/>
</svg>
<div class="a" style="left:0;top:1162px;width:1356px;height:368px;overflow:hidden;background:#67615c">
<svg width="1356" height="368" viewBox="0 1162 1356 368" style="left:0;top:0">
<defs>
<linearGradient id="gsky" x1="0" y1="0" x2="0" y2="1"><stop offset="0" stop-color="#607aa2"/><stop offset="0.075" stop-color="#6680a8"/><stop offset="0.158" stop-color="#6c88b0"/><stop offset="0.242" stop-color="#7490b8"/><stop offset="0.325" stop-color="#7f9cc4"/><stop offset="0.408" stop-color="#8eabd2"/><stop offset="0.492" stop-color="#9dbde4"/><stop offset="0.554" stop-color="#acccf0"/><stop offset="0.617" stop-color="#c0e0f8"/><stop offset="0.658" stop-color="#d0ecfa"/><stop offset="0.7" stop-color="#e4f8fa"/><stop offset="0.742" stop-color="#f0fcfc"/><stop offset="0.8" stop-color="#f4fcfc"/><stop offset="1" stop-color="#f4fcfc"/></linearGradient><radialGradient id="gskyside2"><stop offset="0" stop-color="#a8c4e8" stop-opacity="0.35"/><stop offset="1" stop-color="#a8c4e8" stop-opacity="0"/></radialGradient><radialGradient id="gskyside3"><stop offset="0" stop-color="#a8c4e8" stop-opacity="0.35"/><stop offset="1" stop-color="#a8c4e8" stop-opacity="0"/></radialGradient><linearGradient id="gskyside" x1="0" y1="0" x2="1" y2="0"><stop offset="0" stop-color="#a8c4e8" stop-opacity="0.45"/><stop offset="0.3" stop-color="#a8c4e8" stop-opacity="0"/><stop offset="0.7" stop-color="#a8c4e8" stop-opacity="0"/><stop offset="1" stop-color="#a8c4e8" stop-opacity="0.3"/></linearGradient>
<radialGradient id="gskydark" cx="0.5" cy="0" r="0.6" gradientTransform="translate(0.5 0) scale(1 0.6) translate(-0.5 0)"><stop offset="0" stop-color="#4a6290" stop-opacity="0.35"/><stop offset="1" stop-color="#4a6290" stop-opacity="0"/></radialGradient>
<linearGradient id="gground" x1="0" y1="0" x2="0" y2="1"><stop offset="0" stop-color="#8f9394"/><stop offset="0.12" stop-color="#6e6a67"/><stop offset="0.3" stop-color="#67615c"/><stop offset="1" stop-color="#67615c"/></linearGradient>
<filter id="canb2" x="-0.2" y="-0.3" width="1.4" height="1.6"><feGaussianBlur stdDeviation="0.7"/></filter><filter id="gblur" x="-0.1" y="-0.2" width="1.2" height="1.4"><feGaussianBlur stdDeviation="3.5"/></filter>
</defs>
<rect x="0" y="1162" width="1356" height="240" fill="url(#gsky)"/>

<ellipse cx="0" cy="1230" rx="500" ry="110" fill="url(#gskyside2)"/><ellipse cx="1356" cy="1230" rx="400" ry="110" fill="url(#gskyside3)"/>
<path d="M-20 1384 Q678 1338 1376 1384 L1376 1560 L-20 1560Z" fill="url(#gground)" filter="url(#gblur)"/>
<!-- tiny can -->
<g filter="url(#canb2)">
<rect x="661" y="1326" width="45" height="18" rx="2" fill="#4a3038"/>
<rect x="661" y="1328" width="16" height="15" fill="#3a2624"/>
<rect x="676" y="1328" width="15" height="15" fill="#5a7a8a"/>
<rect x="681" y="1331" width="4" height="6" fill="#c8dcec" opacity="0.8"/>
<rect x="691" y="1329" width="12" height="14" fill="#b8885a"/>
<rect x="695" y="1333" width="6" height="8" fill="#e0a860"/>
<rect x="688" y="1326" width="18" height="4" fill="#9a5a9a"/>
<rect x="661" y="1326" width="27" height="2.5" fill="#2a1a22"/>
</g>
</svg>
</div>

<!-- HIERARCHY -->
<div class="tabbar" style="left:1360px;top:111px;width:458px;height:38px"></div>
<div class="tab" style="left:1360px;top:111px;width:192px;height:38px"></div>
<svg width="24" height="20" viewBox="0 0 24 20" style="left:1376px;top:121px"><g fill="#c8c8c8"><circle cx="2.5" cy="2.5" r="2.2"/><circle cx="6" cy="9" r="2.2"/><circle cx="6" cy="15.5" r="2.2"/><rect x="7" y="1.2" width="16" height="2.6"/><rect x="11" y="7.7" width="12" height="2.6"/><rect x="11" y="14.2" width="12" height="2.6"/></g></svg>
<div class="t" style="left:1409px;top:118px;color:#d4d4d4">Hierarchy</div>
<svg width="20" height="22" viewBox="0 0 20 22" style="left:1749px;top:118px"><path d="M5 11V6.5A4.5 4.5 0 0 1 14 6.5V8" stroke="#cccccc" stroke-width="2.2" fill="none"/><rect x="1.8" y="11.5" width="15" height="8.5" rx="1" stroke="#cccccc" stroke-width="2.2" fill="none"/></svg>
<svg width="8" height="22" viewBox="0 0 8 22" style="left:1788px;top:119px"><g fill="#c8c8c8"><circle cx="4" cy="3" r="2.8"/><circle cx="4" cy="10.5" r="2.8"/><circle cx="4" cy="18" r="2.8"/></g></svg>
<div class="tbar" style="left:1360px;top:149px;width:458px;height:41px;border-bottom:2px solid #262626"></div>
<svg width="60" height="30" viewBox="0 0 60 30" style="left:1370px;top:154px"><path d="M16 3V27M4 15H28" stroke="#c8c8c8" stroke-width="4"/><path d="M37 13H51L44 21Z" fill="#c8c8c8"/></svg>
<div class="a" style="left:1447px;top:154px;width:364px;height:30px;background:#2a2a2a;border:1px solid #222;border-radius:7px"></div>
<div class="a" style="left:1777px;top:156px;width:32px;height:26px;background:#303030;border-radius:0 6px 6px 0"></div>
<svg width="24" height="18" viewBox="0 0 24 18" style="left:1455px;top:161px"><circle cx="6.5" cy="6.5" r="4.8" stroke="#c8c8c8" stroke-width="2.2" fill="none"/><path d="M10 10L15 15" stroke="#c8c8c8" stroke-width="2.6"/><path d="M14 4H20L17 8Z" fill="#c8c8c8"/></svg>
<div class="t" style="left:1485px;top:157px;color:#7c7c7c">All</div>
<svg width="26" height="26" viewBox="0 0 26 26" style="left:1781px;top:157px"><g stroke="#c8c8c8" stroke-width="2" fill="none"><rect x="1.5" y="14.5" width="9" height="9"/><path d="M11 19.5H20.5A3.5 3.5 0 0 0 24 16V4.5A3.5 3.5 0 0 0 20.5 1H9.5A3.5 3.5 0 0 0 6 4.5V14M10.5 15.5L18.5 7M13 7H19V13"/></g></svg>
<div class="panel" style="left:1360px;top:190px;width:458px;height:1340px"></div>
<div class="a" style="left:1360px;top:221px;width:62px;height:1309px;background:#2e2e2e"></div>
<div class="a" style="left:1360px;top:191px;width:458px;height:30px;background:#505050"></div>
<div class="a" style="left:1360px;top:255px;width:458px;height:32px;background:#474747"></div>
<div class="a" style="left:1424px;top:257px;width:4px;height:28px;background:#3a8ee6"></div>
<svg width="460" height="170" viewBox="1360 190 460 170" style="left:1360px;top:190px">
<path d="M1428 199H1446L1437 213Z" fill="#888"/>
<path d="M1456 231H1474L1465 245Z" fill="#888" transform="translate(0 32)"/>
<!-- unity logo -->
<path d="M1468 192.5L1480.5 199.5V211L1468 219.5L1455.5 211V199.5Z" fill="#f0f0f0"/>
<rect x="1466.2" y="192" width="3.6" height="10.5" fill="#505050"/>
<path d="M1462.5 201.5L1466.2 199.5V203L1464.5 204Z M1473.5 201.5L1469.8 199.5V203L1471.5 204Z" fill="#505050"/>
<rect x="1460.2" y="205.2" width="5.7" height="7.4" fill="#505050"/>
<rect x="1470.2" y="205.2" width="5.7" height="7.4" fill="#505050"/>
<path d="M1455.5 209.5L1460.2 212.6H1455.5Z M1480.5 209.5L1475.9 212.6H1480.5Z" fill="#505050"/>
<g transform="translate(1481.0 226.0)" stroke="#d0d0d0" stroke-width="2.2" fill="none" stroke-linejoin="round"><path d="M13.5 1.5L25.5 7.5V21L13.5 27L1.5 21V7.5Z M1.5 7.5L13.5 13.5L25.5 7.5 M13.5 13.5V27"/></g>
<g transform="translate(1481.0 322.0)" stroke="#d0d0d0" stroke-width="2.2" fill="none" stroke-linejoin="round"><path d="M13.5 1.5L25.5 7.5V21L13.5 27L1.5 21V7.5Z M1.5 7.5L13.5 13.5L25.5 7.5 M13.5 13.5V27"/></g>
<g transform="translate(1510.0 290.0)" stroke="#d0d0d0" stroke-width="2.2" fill="none" stroke-linejoin="round"><path d="M13.5 1.5L25.5 7.5V21L13.5 27L1.5 21V7.5Z M1.5 7.5L13.5 13.5L25.5 7.5 M13.5 13.5V27"/></g>
<g transform="translate(1481.0 258.0)"><path d="M1 8L13.5 14V28L1 22Z" fill="#d0d0d0"/><path d="M13.5 14L26 8V22L13.5 28Z" fill="#5cc3f5"/><path d="M1 8L13.5 2L26 8L13.5 14Z" fill="#8fd6fa"/><path d="M6 5.5L18.5 11.5" stroke="#3a3a3a" stroke-width="2"/><path d="M4 12V17L7 16" stroke="#3a3a3a" stroke-width="1.8" fill="none"/></g>
</svg>
<div class="t b" style="left:1491px;top:194px;color:#dadada">SampleScene*</div>
<div class="t" style="left:1517px;top:226px">Main Camera</div>
<div class="t" style="left:1517px;top:258px">cookiecan</div>
<div class="t" style="left:1545px;top:290px;color:#73a9f2">mmGroup0</div>
<div class="t" style="left:1517px;top:322px">Directional Light</div>
<svg width="8" height="22" viewBox="0 0 8 22" style="left:1790px;top:196px"><g fill="#c8c8c8"><circle cx="4" cy="3" r="2.8"/><circle cx="4" cy="10.5" r="2.8"/><circle cx="4" cy="18" r="2.8"/></g></svg>

<!-- PROJECT -->
<div class="tabbar" style="left:1822px;top:111px;width:455px;height:38px"></div>
<div class="tab" style="left:1822px;top:111px;width:162px;height:38px"></div>
<svg width="26" height="20" viewBox="0 0 26 20" style="left:1837px;top:122px"><path d="M0 0H10L12 3H25V19H0Z" fill="#c8c8c8"/></svg>
<div class="t" style="left:1871px;top:118px;color:#d4d4d4">Project</div>
<svg width="20" height="22" viewBox="0 0 20 22" style="left:2208px;top:118px"><path d="M5 11V6.5A4.5 4.5 0 0 1 14 6.5V8" stroke="#cccccc" stroke-width="2.2" fill="none"/><rect x="1.8" y="11.5" width="15" height="8.5" rx="1" stroke="#cccccc" stroke-width="2.2" fill="none"/></svg>
<svg width="8" height="22" viewBox="0 0 8 22" style="left:2247px;top:119px"><g fill="#c8c8c8"><circle cx="4" cy="3" r="2.8"/><circle cx="4" cy="10.5" r="2.8"/><circle cx="4" cy="18" r="2.8"/></g></svg>
<div class="tbar" style="left:1822px;top:149px;width:455px;height:41px;border-bottom:2px solid #262626"></div>
<svg width="60" height="30" viewBox="0 0 60 30" style="left:1832px;top:154px"><path d="M16 3V27M4 15H28" stroke="#c8c8c8" stroke-width="4"/><path d="M37 13H51L44 21Z" fill="#c8c8c8"/></svg>
<div class="a" style="left:1913px;top:154px;width:186px;height:30px;background:#2a2a2a;border:1px solid #222;border-radius:7px"></div>
<div class="a" style="left:2065px;top:156px;width:32px;height:26px;background:#303030;border-radius:0 6px 6px 0"></div>
<svg width="20" height="20" viewBox="0 0 20 20" style="left:1922px;top:160px"><circle cx="7" cy="7" r="4.8" stroke="#c8c8c8" stroke-width="2.2" fill="none"/><path d="M10.5 10.5L15 15" stroke="#c8c8c8" stroke-width="2.6"/></svg>
<svg width="26" height="26" viewBox="0 0 26 26" style="left:2069px;top:157px"><g stroke="#c8c8c8" stroke-width="2" fill="none"><rect x="1.5" y="14.5" width="9" height="9"/><path d="M11 19.5H20.5A3.5 3.5 0 0 0 24 16V4.5A3.5 3.5 0 0 0 20.5 1H9.5A3.5 3.5 0 0 0 6 4.5V14M10.5 15.5L18.5 7M13 7H19V13"/></g></svg>
<div class="a" style="left:2104px;top:149px;width:2px;height:40px;background:#2e2e2e"></div>
<div class="a" style="left:2156px;top:149px;width:2px;height:40px;background:#2e2e2e"></div>
<div class="a" style="left:2208px;top:149px;width:2px;height:40px;background:#2e2e2e"></div>
<svg width="30" height="30" viewBox="0 0 30 30" style="left:2116px;top:154px"><rect x="5" y="2" width="11" height="10" fill="#c8c8c8"/><path d="M18 6L26 18H12Z" fill="#c8c8c8"/><circle cx="9" cy="20" r="7" fill="#c8c8c8"/></svg>
<svg width="30" height="30" viewBox="0 0 30 30" style="left:2168px;top:154px"><path d="M3 16L14 5H24V15L13 26Z" fill="#c8c8c8"/><circle cx="19" cy="10" r="2.3" fill="#3c3c3c"/></svg>
<svg width="36" height="30" viewBox="0 0 36 30" style="left:2218px;top:154px"><path d="M3 15Q15 4 27 15Q15 26 3 15Z" stroke="#c8c8c8" stroke-width="2.4" fill="none"/><path d="M5 25L26 5" stroke="#c8c8c8" stroke-width="2.4"/><circle cx="15" cy="15" r="4" fill="#c8c8c8"/></svg>
<div class="t" style="left:2254px;top:158px;color:#c8c8c8">4</div>
<div class="panel" style="left:1822px;top:190px;width:455px;height:1300px"></div>
<div class="a" style="left:1822px;top:1490px;width:455px;height:41px;background:#3d3d3d;border-top:2px solid #242424"></div>
<svg width="460" height="860" viewBox="1820 190 460 860" style="left:1820px;top:190px">
<path d="M1831 206H1848L1839.5 220Z" fill="#8a8a8a"/>
<path d="M1859 223V203H1867L1869 206H1879V210" stroke="#c8c8c8" stroke-width="2.2" fill="none"/><path d="M1859 224L1864 211H1885L1880 224Z" fill="#c8c8c8"/>
<path d="M1861 237V253L1875 245Z" fill="#8a8a8a"/>
<path d="M1886 234H1895L1897 237H1910V256H1886Z" fill="#c8c8c8"/>
<path d="M1860 270H1877L1868.5 284Z" fill="#8a8a8a"/>
<path d="M1887 287V267H1895L1897 270H1907V274" stroke="#c8c8c8" stroke-width="2.2" fill="none"/><path d="M1887 288L1892 275H1913L1908 288Z" fill="#c8c8c8"/>
<path d="M1915 296H1929L1937 304V322H1915Z" fill="#f2f2f2"/><path d="M1929 296V304H1937" fill="#bdbdbd"/>
<path d="M1886 334H1903L1894.5 348Z" fill="#8a8a8a"/>
<g transform="translate(1911.0 326.0)"><path d="M1 8L13.5 14V28L1 22Z" fill="#d0d0d0"/><path d="M13.5 14L26 8V22L13.5 28Z" fill="#5cc3f5"/><path d="M1 8L13.5 2L26 8L13.5 14Z" fill="#8fd6fa"/><path d="M6 5.5L18.5 11.5" stroke="#3a3a3a" stroke-width="2"/><path d="M4 12V17L7 16" stroke="#3a3a3a" stroke-width="1.8" fill="none"/></g>
<g transform="translate(1940.0 358.0)"><path d="M1 8L13.5 14V28L1 22Z" fill="#d0d0d0"/><path d="M13.5 14L26 8V22L13.5 28Z" fill="#5cc3f5"/><path d="M1 8L13.5 2L26 8L13.5 14Z" fill="#8fd6fa"/><path d="M6 5.5L18.5 11.5" stroke="#3a3a3a" stroke-width="2"/><path d="M4 12V17L7 16" stroke="#3a3a3a" stroke-width="1.8" fill="none"/></g>
<g stroke="#5cc3f5" stroke-width="2.4" fill="none"><rect x="1941" y="392" width="25" height="26"/><path d="M1949.5 392V418M1957.5 392V418M1941 400.5H1966M1941 409H1966"/></g>
<rect x="1910" y="430" width="32" height="14" fill="#7a6e66"/><rect x="1912" y="433" width="6" height="8" fill="#b9a99a"/><rect x="1922" y="435" width="16" height="5" fill="#9d8f84"/>
<circle cx="1926" cy="469" r="12.5" fill="#5cc3f5"/><path d="M1918 471A8.5 8.5 0 0 0 1934 465" stroke="#1f2f3a" stroke-width="3.2" fill="none"/><circle cx="1926" cy="469" r="11.5" fill="none" stroke="#2a6a90" stroke-width="1"/>
<path d="M1831 494H1848L1839.5 508Z" fill="#8a8a8a"/>
<path d="M1859 511V491H1867L1869 494H1879V498" stroke="#c8c8c8" stroke-width="2.2" fill="none"/><path d="M1859 512L1864 499H1885L1880 512Z" fill="#c8c8c8"/>
<path d="M1861 525V541L1875 533Z" fill="#8a8a8a"/>
<path d="M1886 522H1895L1897 525H1910V544H1886Z" fill="#c8c8c8"/>
<path d="M1861 557V573L1875 565Z" fill="#8a8a8a"/>
<path d="M1886 554H1895L1897 557H1910V576H1886Z" fill="#c8c8c8"/>
<path d="M1861 589V605L1875 597Z" fill="#8a8a8a"/>
<path d="M1886 586H1895L1897 589H1910V608H1886Z" fill="#c8c8c8"/>
<path d="M1861 621V637L1875 629Z" fill="#8a8a8a"/>
<path d="M1886 618H1895L1897 621H1910V640H1886Z" fill="#c8c8c8"/>
<path d="M1861 653V669L1875 661Z" fill="#8a8a8a"/>
<path d="M1886 650H1895L1897 653H1910V672H1886Z" fill="#c8c8c8"/>
<path d="M1861 685V701L1875 693Z" fill="#8a8a8a"/>
<path d="M1886 682H1895L1897 685H1910V704H1886Z" fill="#c8c8c8"/>
<path d="M1861 717V733L1875 725Z" fill="#8a8a8a"/>
<path d="M1886 714H1895L1897 717H1910V736H1886Z" fill="#c8c8c8"/>
<path d="M1861 749V765L1875 757Z" fill="#8a8a8a"/>
<path d="M1886 746H1895L1897 749H1910V768H1886Z" fill="#c8c8c8"/>
<path d="M1861 781V797L1875 789Z" fill="#8a8a8a"/>
<path d="M1886 778H1895L1897 781H1910V800H1886Z" fill="#c8c8c8"/>
<path d="M1861 813V829L1875 821Z" fill="#8a8a8a"/>
<path d="M1886 810H1895L1897 813H1910V832H1886Z" fill="#c8c8c8"/>
<path d="M1861 845V861L1875 853Z" fill="#8a8a8a"/>
<path d="M1886 842H1895L1897 845H1910V864H1886Z" fill="#c8c8c8"/>
<path d="M1861 877V893L1875 885Z" fill="#8a8a8a"/>
<path d="M1886 874H1895L1897 877H1910V896H1886Z" fill="#c8c8c8"/>
<path d="M1861 909V925L1875 917Z" fill="#8a8a8a"/>
<path d="M1886 906H1895L1897 909H1910V928H1886Z" fill="#c8c8c8"/>
<path d="M1861 941V957L1875 949Z" fill="#8a8a8a"/>
<path d="M1886 938H1895L1897 941H1910V960H1886Z" fill="#c8c8c8"/>
<path d="M1861 973V989L1875 981Z" fill="#8a8a8a"/>
<path d="M1886 970H1895L1897 973H1910V992H1886Z" fill="#c8c8c8"/>
<path d="M1861 1005V1021L1875 1013Z" fill="#8a8a8a"/>
<path d="M1886 1002H1895L1897 1005H1910V1024H1886Z" fill="#c8c8c8"/>
</svg>
<div class="t b" style="left:1893px;top:202px;color:#d6d6d6">Assets</div>
<div class="t" style="left:1919px;top:234px">Scenes</div>
<div class="t" style="left:1919px;top:266px;font-size:23.5px;letter-spacing:-0.6px">クッキー缶</div>
<div class="t" style="left:1947px;top:298px">cookiecan</div>
<div class="t" style="left:1947px;top:330px">cookiecan</div>
<div class="t" style="left:1975px;top:362px">mmGroup0</div>
<div class="t" style="left:1975px;top:394px">mmGroup0</div>
<div class="t" style="left:1947px;top:426px">cookiecan_main</div>
<div class="t" style="left:1947px;top:458px">main</div>
<div class="t b" style="left:1893px;top:490px;color:#d6d6d6">Packages</div>
<div class="t" style="left:1919px;top:522px">Code Coverage</div>
<div class="t" style="left:1919px;top:554px">Custom NUnit</div>
<div class="t" style="left:1919px;top:586px">Editor Coroutines</div>
<div class="t" style="left:1919px;top:618px">JetBrains Rider Editor</div>
<div class="t" style="left:1919px;top:650px">Newtonsoft Json</div>
<div class="t" style="left:1919px;top:682px">Profile Analyzer</div>
<div class="t" style="left:1919px;top:714px">Services Core</div>
<div class="t" style="left:1919px;top:746px">Settings Manager</div>
<div class="t" style="left:1919px;top:778px">Test Framework</div>
<div class="t" style="left:1919px;top:810px">TextMeshPro</div>
<div class="t" style="left:1919px;top:842px">Timeline</div>
<div class="t" style="left:1919px;top:874px">Unity UI</div>
<div class="t" style="left:1919px;top:906px">Version Control</div>
<div class="t" style="left:1919px;top:938px">Visual Scripting</div>
<div class="t" style="left:1919px;top:970px">Visual Studio Code Editor</div>
<div class="t" style="left:1919px;top:1002px">Visual Studio Editor</div>

<!-- INSPECTOR -->
<div class="tabbar" style="left:2281px;top:111px;width:593px;height:38px;border-radius:6px 0 0 0"></div>
<div class="tab" style="left:2281px;top:111px;width:186px;height:38px"></div>
<svg width="22" height="22" viewBox="0 0 22 22" style="left:2298px;top:120px"><circle cx="11" cy="11" r="10" fill="#c8c8c8"/><rect x="9.2" y="9" width="3.6" height="8" fill="#3c3c3c"/><circle cx="11" cy="5.6" r="2" fill="#3c3c3c"/></svg>
<div class="t" style="left:2330px;top:118px;color:#d4d4d4">Inspector</div>
<svg width="20" height="22" viewBox="0 0 20 22" style="left:2806px;top:118px"><path d="M5 11V6.5A4.5 4.5 0 0 1 14 6.5V8" stroke="#cccccc" stroke-width="2.2" fill="none"/><rect x="1.8" y="11.5" width="15" height="8.5" rx="1" stroke="#cccccc" stroke-width="2.2" fill="none"/></svg>
<svg width="8" height="22" viewBox="0 0 8 22" style="left:2845px;top:119px"><g fill="#c8c8c8"><circle cx="4" cy="3" r="2.8"/><circle cx="4" cy="10.5" r="2.8"/><circle cx="4" cy="18" r="2.8"/></g></svg>
<div class="panel" style="left:2281px;top:149px;width:593px;height:1381px"></div>
<div class="a" style="left:2281px;top:149px;width:593px;height:154px;background:#3d3d3d"></div>
<div class="a" style="left:2281px;top:303px;width:593px;height:2px;background:#262626"></div>
<div class="a" style="left:2281px;top:305px;width:593px;height:40px;background:#3e3e3e"></div>
<div class="a" style="left:2281px;top:345px;width:593px;height:1px;background:#303030"></div>
<div class="a" style="left:2281px;top:488px;width:593px;height:2px;background:#262626"></div>
<svg width="593" height="440" viewBox="2281 149 593 440" style="left:2281px;top:149px">
<!-- big prefab icon -->
<g transform="translate(2296 170)"><path d="M0 11L19 20V42L0 33Z" fill="#d0d0d0"/><path d="M19 20L40 11V33L19 42Z" fill="#5cc3f5"/><path d="M0 11L19 2L40 11L19 20Z" fill="#8fd6fa"/><path d="M8 7L28 16" stroke="#3d3d3d" stroke-width="3"/><path d="M5 18V26L10 24" stroke="#3d3d3d" stroke-width="2.6" fill="none"/></g>
<path d="M2333 211H2349L2341 220Z" fill="#c4c4c4"/>
<!-- active checkbox -->
<rect x="2373.5" y="171.5" width="27" height="27" rx="4" fill="#2a2a2a" stroke="#1f1f1f"/>
<path d="M2380 185L2385 191L2394 179" stroke="#e6e6e6" stroke-width="3" fill="none"/>
<rect x="2413.5" y="167.5" width="302" height="34" rx="6" fill="#2a2a2a" stroke="#1f1f1f"/>
<rect x="2723.5" y="171.5" width="27" height="27" rx="4" fill="#2a2a2a" stroke="#1f1f1f"/>
<path d="M2849 182H2865L2857 191Z" fill="#c4c4c4"/>
<!-- tag / layer dropdowns -->
<rect x="2418" y="217" width="183" height="32" rx="5" fill="#515151" stroke="#303030"/>
<path d="M2575 229H2591L2583 238Z" fill="#c4c4c4"/>
<rect x="2705" y="217" width="162" height="32" rx="5" fill="#515151" stroke="#303030"/>
<path d="M2842 229H2858L2850 238Z" fill="#c4c4c4"/>
<!-- model buttons -->
<rect x="2395" y="259" width="252" height="32" rx="5" fill="#515151" stroke="#303030"/>
<rect x="2511" y="259" width="2" height="32" fill="#303030"/>
<rect x="2673" y="259" width="194" height="32" rx="5" fill="#515151" stroke="#303030"/>
<path d="M2842 271H2858L2850 280Z" fill="#c4c4c4"/>
<!-- transform header -->
<path d="M2293 318H2311L2302 332Z" fill="#8a8a8a"/>
<g stroke-width="6" stroke-linecap="round"><path d="M2337 316V326" stroke="#9ee34a"/><path d="M2335 331L2327 336" stroke="#5cc3f5"/><path d="M2339 331L2348 336" stroke="#f07850"/></g>
<circle cx="2771" cy="325" r="10.5" fill="#c8c8c8"/>
<text x="2765" y="333" font-family="Liberation Sans" font-weight="700" font-size="17" fill="#3e3e3e">?</text>
<g stroke="#c8c8c8" stroke-width="2.6"><path d="M2800 320H2820M2800 330H2820M2814 315V325M2806 325V335"/></g>
<g fill="#c8c8c8"><circle cx="2851" cy="317" r="2.8"/><circle cx="2851" cy="325" r="2.8"/><circle cx="2851" cy="333" r="2.8"/></g>
<!-- fields -->
<g fill="#2a2a2a" stroke="#1f1f1f">
<rect x="2527.5" y="355.5" width="86" height="35" rx="6"/><rect x="2654.5" y="355.5" width="86" height="35" rx="6"/><rect x="2782.5" y="355.5" width="86" height="35" rx="6"/>
<rect x="2527.5" y="395.5" width="86" height="35" rx="6"/><rect x="2654.5" y="395.5" width="86" height="35" rx="6"/><rect x="2782.5" y="395.5" width="86" height="35" rx="6"/>
<rect x="2525.5" y="435.5" width="88" height="35" rx="6"/><rect x="2652.5" y="435.5" width="88" height="35" rx="6"/><rect x="2780.5" y="435.5" width="88" height="35" rx="6"/>
</g>
<rect x="2281" y="435" width="4" height="36" fill="#3a8ee6"/>
<!-- link icon -->
<g stroke="#c8c8c8" stroke-width="2.2" fill="none"><path d="M2461 446H2457A6 6 0 0 0 2457 458H2461M2469 446H2473A6 6 0 0 1 2473 458H2469"/><path d="M2455 442L2477 464"/></g>
</svg>
<div class="t" style="left:2418px;top:172px;font-weight:700;font-size:24.5px;color:#dedede">cookiecan</div>
<div class="t" style="left:2760px;top:173px">Static</div>
<div class="t" style="left:2366px;top:221px">Tag</div>
<div class="t" style="left:2425px;top:221px">Untagged</div>
<div class="t" style="left:2632px;top:221px">Layer</div>
<div class="t" style="left:2711px;top:221px">Default</div>
<div class="t" style="left:2316px;top:263px">Model</div>
<div class="t" style="left:2424px;top:263px;color:#dadada">Open</div>
<div class="t" style="left:2545px;top:263px;color:#dadada">Select</div>
<div class="t" style="left:2679px;top:263px;color:#dadada">Overrides</div>
<div class="t b" style="left:2402px;top:313px;color:#d6d6d6">Transform</div>
<div class="t b" style="left:2319px;top:361px">Position</div>
<div class="t b" style="left:2319px;top:401px">Rotation</div>
<div class="t b" style="left:2319px;top:441px">Scale</div>
<div class="t b" style="left:2497px;top:361px">X</div><div class="t b" style="left:2535px;top:361px">0</div>
<div class="t b" style="left:2625px;top:361px">Y</div><div class="t b" style="left:2662px;top:361px">0</div>
<div class="t b" style="left:2752px;top:361px">Z</div><div class="t b" style="left:2790px;top:361px">0</div>
<div class="t b" style="left:2497px;top:401px">X</div><div class="t b" style="left:2535px;top:401px">0</div>
<div class="t b" style="left:2625px;top:401px">Y</div><div class="t b" style="left:2662px;top:401px">0</div>
<div class="t b" style="left:2752px;top:401px">Z</div><div class="t b" style="left:2790px;top:401px">0</div>
<div class="t b" style="left:2497px;top:441px">X</div><div class="t b" style="left:2532px;top:441px">10</div>
<div class="t b" style="left:2625px;top:441px">Y</div><div class="t b" style="left:2659px;top:441px">10</div>
<div class="t b" style="left:2752px;top:441px">Z</div><div class="t b" style="left:2787px;top:441px">10</div>
<div class="a" style="left:2351px;top:509px;width:456px;height:44px;background:#585858;border-radius:5px;border-bottom:1px solid #2a2a2a"></div>
<div class="t" style="left:2490px;top:519px;color:#dedede">Add Component</div>

<!-- STATUS BAR -->
<div class="a" style="left:0;top:1531px;width:2874px;height:46px;background:#151515"></div>
<div class="a" style="left:0;top:1531px;width:2874px;height:44px;background:#191919;border-bottom:2px solid #4f4f4f;border-radius:0 0 13px 13px"></div>
<svg width="30" height="28" viewBox="0 0 30 28" style="left:2px;top:1538px"><path d="M15 2L28 26H2Z" fill="#f5b818" stroke="#f5b818" stroke-width="2.5" stroke-linejoin="round"/><path d="M15 9V19" stroke="#2a1a00" stroke-width="3.2" stroke-linecap="round"/><circle cx="15" cy="23" r="1.8" fill="#2a1a00"/></svg>
<div class="t" style="left:37px;top:1542px;color:#f2c24a">Mesh 'mesh' has no normals. Recalculating normals.</div>
<div class="a" style="left:2669px;top:1534px;width:1px;height:40px;background:#2a2a2a"></div>
<div class="a" style="left:2720px;top:1534px;width:1px;height:40px;background:#2a2a2a"></div>
<div class="a" style="left:2772px;top:1534px;width:1px;height:40px;background:#2a2a2a"></div>
<div class="a" style="left:2824px;top:1534px;width:1px;height:40px;background:#2a2a2a"></div>
<svg width="220" height="40" viewBox="2660 1535 220 40" style="left:2660px;top:1535px">
<g fill="#c4c4c4"><ellipse cx="2694" cy="1557" rx="10" ry="11"/><circle cx="2694" cy="1545" r="5"/></g>
<g stroke="#c4c4c4" stroke-width="2"><path d="M2682 1550L2686 1553M2706 1550L2702 1553M2681 1559H2685M2707 1559H2703M2683 1567L2686 1564M2705 1567L2702 1564"/></g>
<path d="M2681 1541L2709 1570" stroke="#191919" stroke-width="4"/><path d="M2681 1541L2709 1570" stroke="#c4c4c4" stroke-width="2"/>
<g fill="#c4c4c4"><ellipse cx="2746" cy="1546" rx="13" ry="5"/><path d="M2733 1550Q2746 1557 2759 1550V1556Q2746 1563 2733 1556Z"/><path d="M2733 1559Q2746 1566 2759 1559V1564Q2746 1571 2733 1564Z"/></g>
<path d="M2734 1541L2760 1570" stroke="#191919" stroke-width="4"/><path d="M2734 1541L2760 1570" stroke="#c4c4c4" stroke-width="2"/>
<g stroke="#c4c4c4" stroke-width="2.2" fill="none"><path d="M2786 1548A13 13 0 0 1 2810 1548M2810 1562A13 13 0 0 1 2786 1562"/></g>
<circle cx="2798" cy="1555" r="6" fill="#c4c4c4"/>
<path d="M2786 1541L2811 1570" stroke="#191919" stroke-width="4"/><path d="M2786 1541L2811 1570" stroke="#c4c4c4" stroke-width="2"/>
<circle cx="2850" cy="1555" r="13" fill="none" stroke="#c4c4c4" stroke-width="2"/>
<path d="M2844 1555L2848.5 1560L2856 1550" stroke="#c4c4c4" stroke-width="2.6" fill="none"/>
</svg>


</body></html>
